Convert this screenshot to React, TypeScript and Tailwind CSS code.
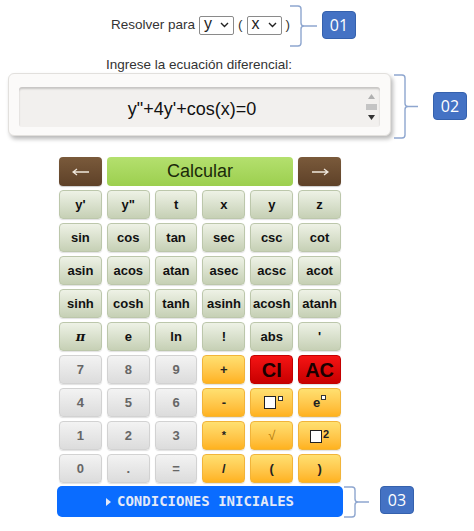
import React from "react";

type Kind = "sage" | "gray" | "orange" | "red";

const KIND: Record<Kind, string> = {
  sage: "bg-gradient-to-b from-[#eef2e6] to-[#c6d0b5] border-[#bcc7ab] text-[#111]",
  gray: "bg-gradient-to-b from-[#f3f3f3] to-[#dcdcdc] border-[#d2d2d2] text-[#666]",
  orange: "bg-gradient-to-b from-[#ffe070] to-[#ffb21c] border-[#f1b43a] text-[#222]",
  red: "bg-gradient-to-b from-[#f51414] to-[#c80000] border-[#c40000] text-[#1a0000]",
};

const Box = ({ size }: { size: "lg" | "sm" }) => (
  <span
    className={
      size === "lg"
        ? "block h-[13px] w-[12px] border border-[#222] bg-white"
        : "block h-[5px] w-[5px] border border-[#333] bg-white"
    }
  />
);

function Key({
  kind = "sage",
  children,
  className = "",
}: {
  kind?: Kind;
  children: React.ReactNode;
  className?: string;
}) {
  return (
    <div
      className={`flex h-[29px] items-center justify-center rounded-[4px] border shadow-[0_1px_1px_rgba(0,0,0,0.12)] text-[13px] font-bold ${KIND[kind]} ${className}`}
    >
      {children}
    </div>
  );
}

function Bracket({ h, w = 26 }: { h: number; w?: number }) {
  const xl = 11;
  const ym = h / 2;
  return (
    <svg width={w} height={h + 2} viewBox={`0 -1 ${w} ${h + 2}`} fill="none">
      <path
        d={`M0,0 L${xl - 3},0 Q${xl},0 ${xl},3 L${xl},${ym - 3} Q${xl},${ym} ${xl + 3},${ym} L${w},${ym} M${xl + 3},${ym} Q${xl},${ym} ${xl},${ym + 3} L${xl},${h - 3} Q${xl},${h} ${xl - 3},${h} L0,${h}`}
        stroke="#8ea6cf"
        strokeWidth="1.4"
      />
    </svg>
  );
}

function Badge({ children }: { children: React.ReactNode }) {
  return (
    <div className="flex h-[28px] w-[34px] items-center justify-center rounded-[4px] border border-[#3561ad] bg-[#4472c4] font-['Open_Sans',sans-serif] text-[16px] text-white">
      {children}
    </div>
  );
}

function Select({ value }: { value: string }) {
  return (
    <div className="flex h-[19px] w-[35px] items-center justify-between rounded-[2px] border border-[#8a8a8a] bg-white pl-[4px] pr-[4px] text-[16px] leading-none text-[#222]">
      <span className="-mt-[2px]">{value}</span>
      <svg width="9" height="6" viewBox="0 0 9 6" fill="none">
        <path d="M1,1 L4.5,4.5 L8,1" stroke="#222" strokeWidth="1.4" />
      </svg>
    </div>
  );
}

function Arrow({ dir }: { dir: "left" | "right" }) {
  return (
    <svg width="18" height="8" viewBox="0 0 18 8" fill="none">
      {dir === "left" ? (
        <path d="M1,4 L17,4 M5,1 L1,4 L5,7" stroke="#efe7dc" strokeWidth="1.3" />
      ) : (
        <path d="M1,4 L17,4 M13,1 L17,4 L13,7" stroke="#efe7dc" strokeWidth="1.3" />
      )}
    </svg>
  );
}

const SAGE_ROWS = [
  ["y'", 'y"', "t", "x", "y", "z"],
  ["sin", "cos", "tan", "sec", "csc", "cot"],
  ["asin", "acos", "atan", "asec", "acsc", "acot"],
  ["sinh", "cosh", "tanh", "asinh", "acosh", "atanh"],
];

export default function App() {
  return (
    <div className="relative h-[531px] w-[474px] overflow-hidden bg-white font-['Liberation_Sans',Arial,sans-serif] text-[#333]">
      {/* Resolver para */}
      <div className="flex h-[50px] items-center pl-[111px] text-[13.5px]">
        <span className="mr-[4px]">Resolver para</span>
        <Select value="y" />
        <span className="mx-[4px]">(</span>
        <Select value="x" />
        <span className="ml-[4px]">)</span>
      </div>

      <div className="mt-[7px] pl-[106px] text-[13.5px] leading-[16px]">
        Ingrese la ecuación diferencial:
      </div>

      {/* input panel */}
      <div className="ml-[8px] h-[63px] w-[383px] rounded-[6px] border border-[#e2e0dd] bg-[#fbfaf9] px-[10px] pt-[13px] shadow-[2px_3px_4px_rgba(0,0,0,0.28)]">
        <div className="flex h-[40px] items-center rounded-[3px] bg-[#f2f0ee] shadow-[inset_0_2px_2px_rgba(0,0,0,0.18)]">
          <div className="flex-1 pt-[4px] text-center text-[18px] text-[#111]">y"+4y'+cos(x)=0</div>
          <div className="mr-[2px] flex h-[34px] w-[13px] flex-col items-center justify-between py-[4px]">
            <svg width="7" height="5" viewBox="0 0 7 5">
              <path d="M0,5 L3.5,0 L7,5 Z" fill="#b0b0b0" />
            </svg>
            <div className="h-[6px] w-[11px] bg-[#c4c4c4]" />
            <svg width="7" height="5" viewBox="0 0 7 5">
              <path d="M0,0 L3.5,5 L7,0 Z" fill="#333" />
            </svg>
          </div>
        </div>
      </div>

      {/* keypad */}
      <div className="ml-[59px] mt-[21px] flex w-[282px] flex-col gap-[4px]">
        <div className="grid grid-cols-[43px_1fr_43px] gap-[5px]">
          <div className="flex h-[29px] items-center justify-center rounded-[4px] bg-gradient-to-b from-[#7a5a3b] to-[#5e4128] shadow-[0_1px_1px_rgba(0,0,0,0.2)]">
            <Arrow dir="left" />
          </div>
          <div className="flex h-[29px] items-center justify-center rounded-[4px] bg-gradient-to-b from-[#b4e06e] to-[#9ccf4e] text-[18px] text-[#1b2a0a]">
            Calcular
          </div>
          <div className="flex h-[29px] items-center justify-center rounded-[4px] bg-gradient-to-b from-[#7a5a3b] to-[#5e4128] shadow-[0_1px_1px_rgba(0,0,0,0.2)]">
            <Arrow dir="right" />
          </div>
        </div>

        {SAGE_ROWS.map((row) => (
          <div key={row[0]} className="grid grid-cols-6 gap-[5px]">
            {row.map((k) => (
              <Key key={k}>{k}</Key>
            ))}
          </div>
        ))}

        <div className="grid grid-cols-6 gap-[5px]">
          <Key>
            <span className="font-['DejaVu_Serif',serif] italic">π</span>
          </Key>
          <Key>e</Key>
          <Key>ln</Key>
          <Key>!</Key>
          <Key>abs</Key>
          <Key>'</Key>
        </div>

        <div className="grid grid-cols-6 gap-[5px]">
          <Key kind="gray">7</Key>
          <Key kind="gray">8</Key>
          <Key kind="gray">9</Key>
          <Key kind="orange">+</Key>
          <Key kind="red" className="text-[20px]">CI</Key>
          <Key kind="red" className="text-[20px]">AC</Key>
        </div>

        <div className="grid grid-cols-6 gap-[5px]">
          <Key kind="gray">4</Key>
          <Key kind="gray">5</Key>
          <Key kind="gray">6</Key>
          <Key kind="orange">-</Key>
          <Key kind="orange">
            <span className="flex items-start gap-[2px] pl-[4px]">
              <Box size="lg" />
              <Box size="sm" />
            </span>
          </Key>
          <Key kind="orange">
            <span className="flex items-start gap-[1px]">
              <span className="leading-[15px]">e</span>
              <Box size="sm" />
            </span>
          </Key>
        </div>

        <div className="grid grid-cols-6 gap-[5px]">
          <Key kind="gray">1</Key>
          <Key kind="gray">2</Key>
          <Key kind="gray">3</Key>
          <Key kind="orange">
            <span className="text-[11px]">*</span>
          </Key>
          <Key kind="orange">
            <span className="font-normal text-[#b07a10]">√</span>
          </Key>
          <Key kind="orange">
            <span className="flex items-start gap-[1px]">
              <span className="mt-[2px]">
                <Box size="lg" />
              </span>
              <span className="-mt-[2px] text-[11px]">2</span>
            </span>
          </Key>
        </div>

        <div className="grid grid-cols-6 gap-[5px]">
          <Key kind="gray">0</Key>
          <Key kind="gray">.</Key>
          <Key kind="gray">=</Key>
          <Key kind="orange">/</Key>
          <Key kind="orange">(</Key>
          <Key kind="orange">)</Key>
        </div>
      </div>

      <div className="ml-[57px] mt-[3px] flex h-[31px] w-[286px] items-center justify-center gap-[6px] rounded-[5px] bg-[#0a6cff] font-['DejaVu_Sans_Mono',monospace] text-[14px] font-bold text-[#e3e9f7]">
        <svg width="5" height="8" viewBox="0 0 5 8">
          <path d="M0,0 L5,4 L0,8 Z" fill="#e3e9f7" />
        </svg>
        <span>CONDICIONES INICIALES</span>
      </div>

      {/* annotations */}
      <div className="absolute left-[290px] top-[5px]">
        <Bracket h={40} w={27} />
      </div>
      <div className="absolute left-[322px] top-[11px]">
        <Badge>01</Badge>
      </div>

      <div className="absolute left-[394px] top-[74px]">
        <Bracket h={63} w={24} />
      </div>
      <div className="absolute left-[433px] top-[92px]">
        <Badge>02</Badge>
      </div>

      <div className="absolute left-[344px] top-[486px]">
        <Bracket h={30} w={25} />
      </div>
      <div className="absolute left-[380px] top-[486px]">
        <Badge>03</Badge>
      </div>
    </div>
  );
}
